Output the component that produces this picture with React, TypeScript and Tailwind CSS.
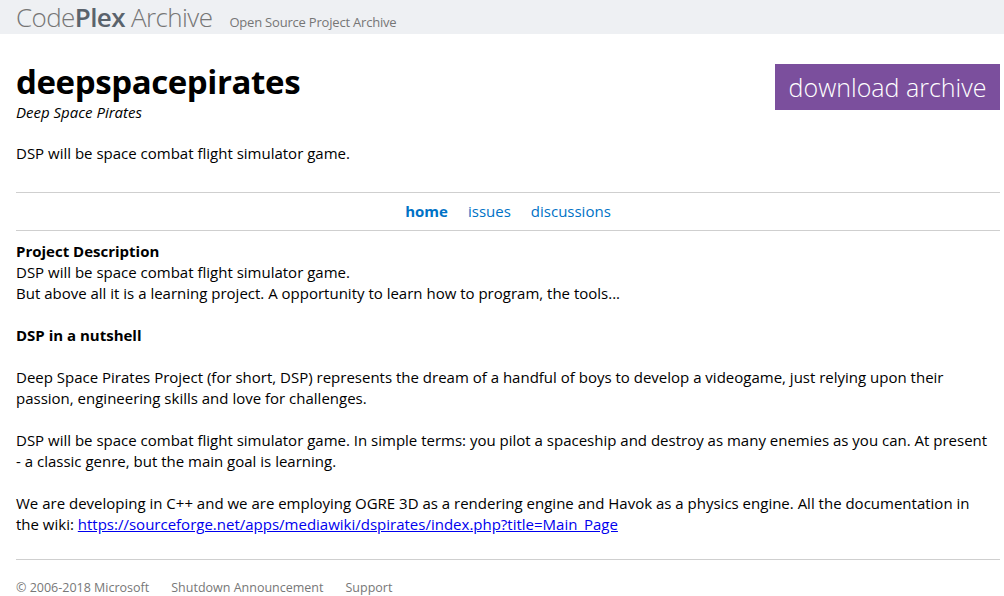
export default function App() {
  return (
    <div className="min-h-screen bg-white text-black font-['Open_Sans',sans-serif]">
      <header className="bg-[#eef0f3] h-[34px] flex items-end px-4">
        <div className="flex items-baseline">
          <span className="text-[26px] leading-[34px] font-light tracking-[-0.6px] text-[#767676]">
            Code<span className="font-semibold text-[#5a636c]">Plex</span> Archive
          </span>
          <span className="ml-[17px] text-[13px] tracking-[-0.2px] text-[#767676]">Open Source Project Archive</span>
        </div>
      </header>

      <main className="pl-4 pr-1">
        <div className="flex justify-between items-start pt-[30px]">
          <div>
            <h1 className="text-[33px] leading-[36px] font-bold tracking-[-0.4px]">deepspacepirates</h1>
            <p className="italic text-[15px] leading-[20px] mt-[2px]">Deep Space Pirates</p>
          </div>
          <a className="bg-[#7b4f9d] text-white text-[25px] font-light leading-[46px] px-3 h-[46px] w-[225px] text-center">
            download archive
          </a>
        </div>
        <p className="text-[15px] leading-[21px] mt-[21px]">DSP will be space combat flight simulator game.</p>

        <hr className="mt-[28px] border-t border-[#cfcfcf]" />
        <nav className="flex justify-center gap-5 text-[15px] leading-[37px] text-[#0072c6]">
          <a className="font-bold">home</a>
          <a>issues</a>
          <a>discussions</a>
        </nav>
        <hr className="border-t border-[#cfcfcf]" />

        <div className="text-[15px] leading-[21px] pt-[10px] pr-3">
          <p className="font-bold">Project Description</p>
          <p>DSP will be space combat flight simulator game.</p>
          <p>But above all it is a learning project. A opportunity to learn how to program, the tools...</p>
          <p className="mt-[21px] font-bold">DSP in a nutshell</p>
          <p className="mt-[21px]">
            Deep Space Pirates Project (for short, DSP) represents the dream of a handful of boys to develop a videogame, just relying upon their passion, engineering skills and love for challenges.
          </p>
          <p className="mt-[21px]">
            DSP will be space combat flight simulator game. In simple terms: you pilot a spaceship and destroy as many enemies as you can. At present - a classic genre, but the main goal is learning.
          </p>
          <p className="mt-[21px]">
            We are developing in C++ and we are employing OGRE 3D as a rendering engine and Havok as a physics engine. All the documentation in the wiki:{" "}
            <a className="text-[#0000ee] underline">https://sourceforge.net/apps/mediawiki/dspirates/index.php?title=Main_Page</a>
          </p>
        </div>

        <hr className="mt-[24px] border-t border-[#cfcfcf]" />
        <footer className="flex gap-[22px] text-[12.5px] text-[#777] pt-[19px]">
          <span>© 2006-2018 Microsoft</span>
          <span>Shutdown Announcement</span>
          <span>Support</span>
        </footer>
      </main>
    </div>
  );
}
